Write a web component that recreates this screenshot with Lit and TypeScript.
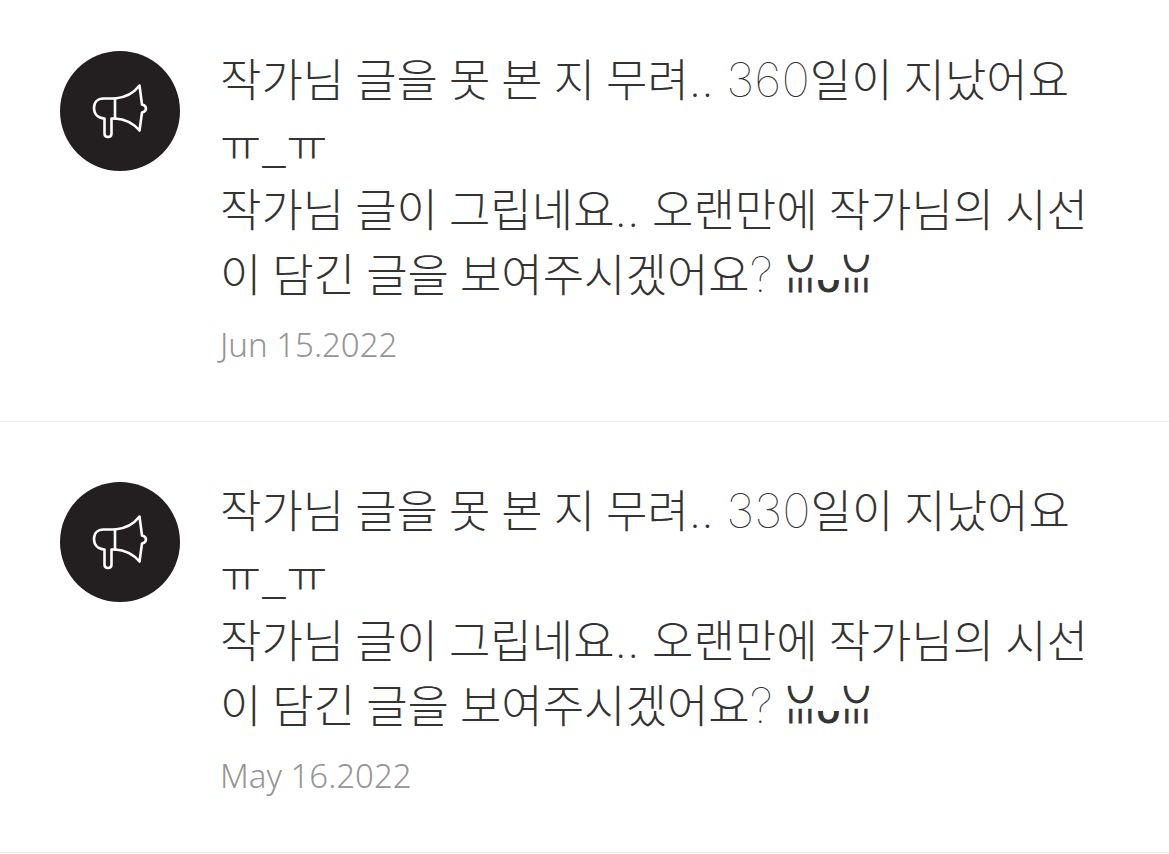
import { LitElement, html, css } from "lit";
import { customElement, property } from "lit/decorators.js";

@customElement("notice-item")
export class NoticeItem extends LitElement {
  @property({ type: Number }) days = 0;
  @property() date = "";

  static styles = css`
    :host {
      display: block;
      border-bottom: 1px solid #e9e9e9;
    }
    .item {
      display: flex;
      align-items: flex-start;
      gap: 40px;
      padding: 60px 60px 52px;
    }
    :host(:first-of-type) .item {
      padding-top: 51px;
    }
    .avatar {
      flex: none;
      display: block;
      width: 120px;
      height: 120px;
      border-radius: 50%;
      background: #231f20;
    }
    .body {
      flex: 1;
      min-width: 0;
      margin-top: -2px;
    }
    .message {
      margin: 0;
      font-size: 45px;
      line-height: 65px;
      color: #333;
    }
    .latin,
    .dots {
      font-family: Inter, Roboto, sans-serif;
      line-height: 1;
    }
    .latin {
      font-size: 48px;
      font-weight: 100;
    }
    .dots {
      font-weight: 200;
    }
    .face {
      font-family: "Noto Sans CJK KR", sans-serif;
      line-height: 1;
    }
    .smile {
      font-size: 42px;
      line-height: 1;
      -webkit-text-stroke: 1px #333;
    }
    .date {
      display: block;
      margin-top: 12px;
      font-family: "Noto Sans", sans-serif;
      font-size: 33px;
      line-height: 48px;
      color: #959595;
    }
  `;

  render() {
    return html`
      <article class="item">
        <svg class="avatar" viewBox="0 0 120 120" role="img" aria-label="Notice">
          <g fill="none" stroke="#fff" stroke-width="2.6" stroke-linejoin="round" stroke-linecap="round">
            <path d="M55 47.5H43.5C37.500 47.500 34 51.500 34 57C34 63 38 67 44.500 67.500V82.500Q44.500 86 48 86Q51.500 86 51.500 82.500V67.500H55C65 68 73 72 79.500 79.500L82 61.500Q86 60.500 86 57.500Q86 54.500 82 53.500L79.500 34.500C73.500 42.500 66 46.500 55 47.500Z"/>
            <path d="M55 47.500V67.500"/>
          </g>
        </svg>
        <div class="body">
          <p class="message">작가님 글을 못 본 지 무려<span class="dots">.. </span><span class="latin">${this.days}</span>일이 지났어요 <span class="face">ㅠ_ㅠ</span><br />작가님 글이 그립네요<span class="dots">.. </span>오랜만에 작가님의 시선이 담긴 글을 보여주시겠어요<span class="latin">?</span> <span class="smile">ꈍᴗꈍ</span></p>
          <time class="date">${this.date}</time>
        </div>
      </article>
    `;
  }
}

@customElement("app-root")
export class AppRoot extends LitElement {
  static styles = css`
    :host {
      display: block;
      background: #fff;
      font-family: Roboto, "Noto Sans CJK KR", sans-serif;
      font-weight: 300;
    }
  `;

  render() {
    return html`
      <main>
        <notice-item .days=${360} .date=${"Jun 15.2022"}></notice-item>
        <notice-item .days=${330} .date=${"May 16.2022"}></notice-item>
      </main>
    `;
  }
}
